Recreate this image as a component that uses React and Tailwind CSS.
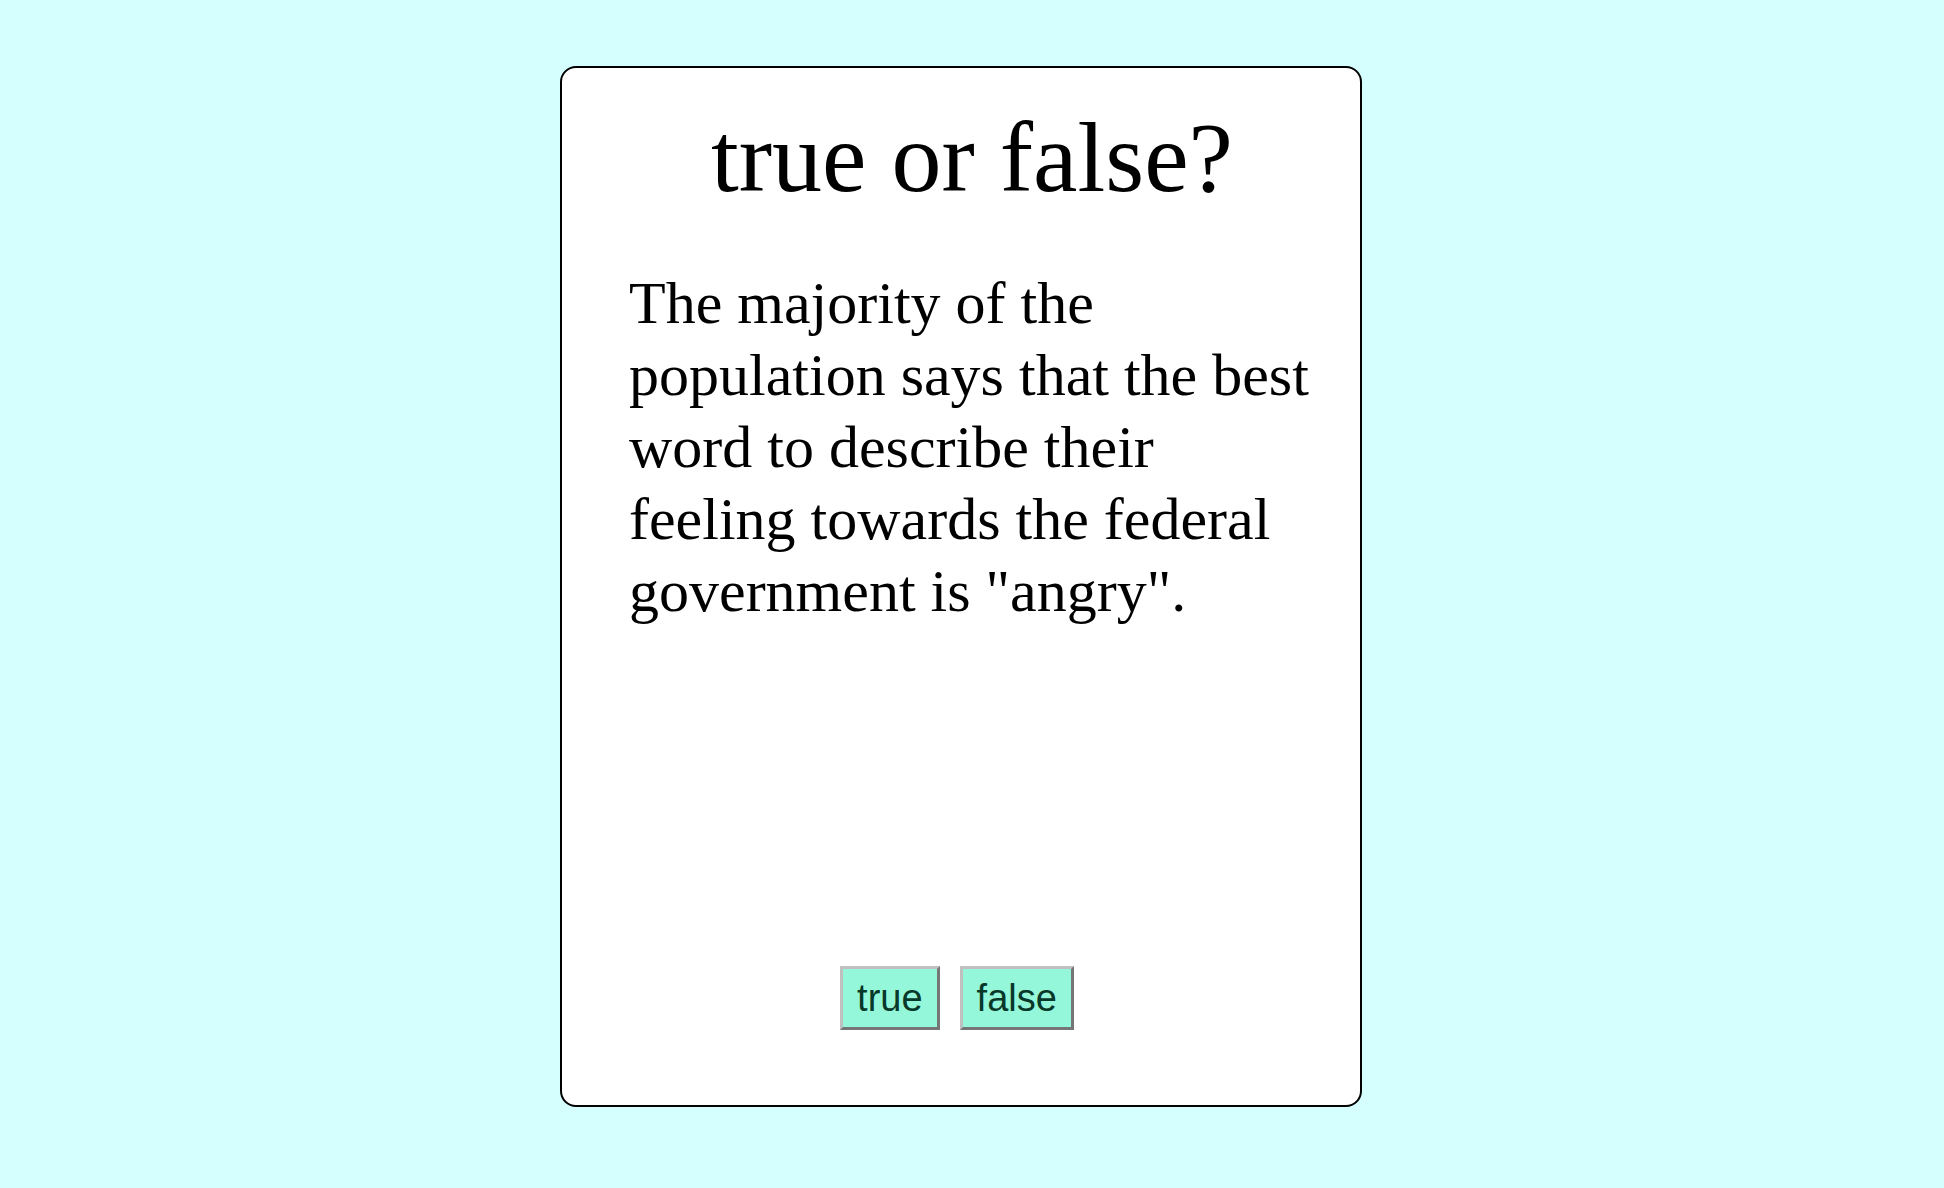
export default function App() {
  return (
    <div className="min-h-[1188px] w-full bg-[#d4fffe] pt-[66px] pl-[560px]">
      <div className="flex h-[1041px] w-[802px] flex-col rounded-[16px] border-2 border-black bg-white">
        <h1 className="pt-[40px] pl-[22px] text-center font-['Liberation_Serif',serif] text-[100px] leading-[100px] text-black">
          true or false?
        </h1>
        <p className="mt-[59px] w-[767px] pl-[67px] font-['Liberation_Serif',serif] text-[60px] leading-[72px] text-black">
          The majority of the population says that the best word to describe their feeling towards the federal government is "angry".
        </p>
        <div className="mt-auto flex justify-center gap-[20px] pb-[75px] pr-[8px] font-['Liberation_Sans',sans-serif]">
          <button className="border-[3px] border-t-[#c0c0c0] border-l-[#c0c0c0] border-b-[#767676] border-r-[#767676] bg-[#95f7d9] px-[14px] py-[7px] text-[38px] leading-[44px] text-[#08382a]">
            true
          </button>
          <button className="border-[3px] border-t-[#c0c0c0] border-l-[#c0c0c0] border-b-[#767676] border-r-[#767676] bg-[#95f7d9] px-[14px] py-[7px] text-[38px] leading-[44px] text-[#08382a]">
            false
          </button>
        </div>
      </div>
    </div>
  );
}
